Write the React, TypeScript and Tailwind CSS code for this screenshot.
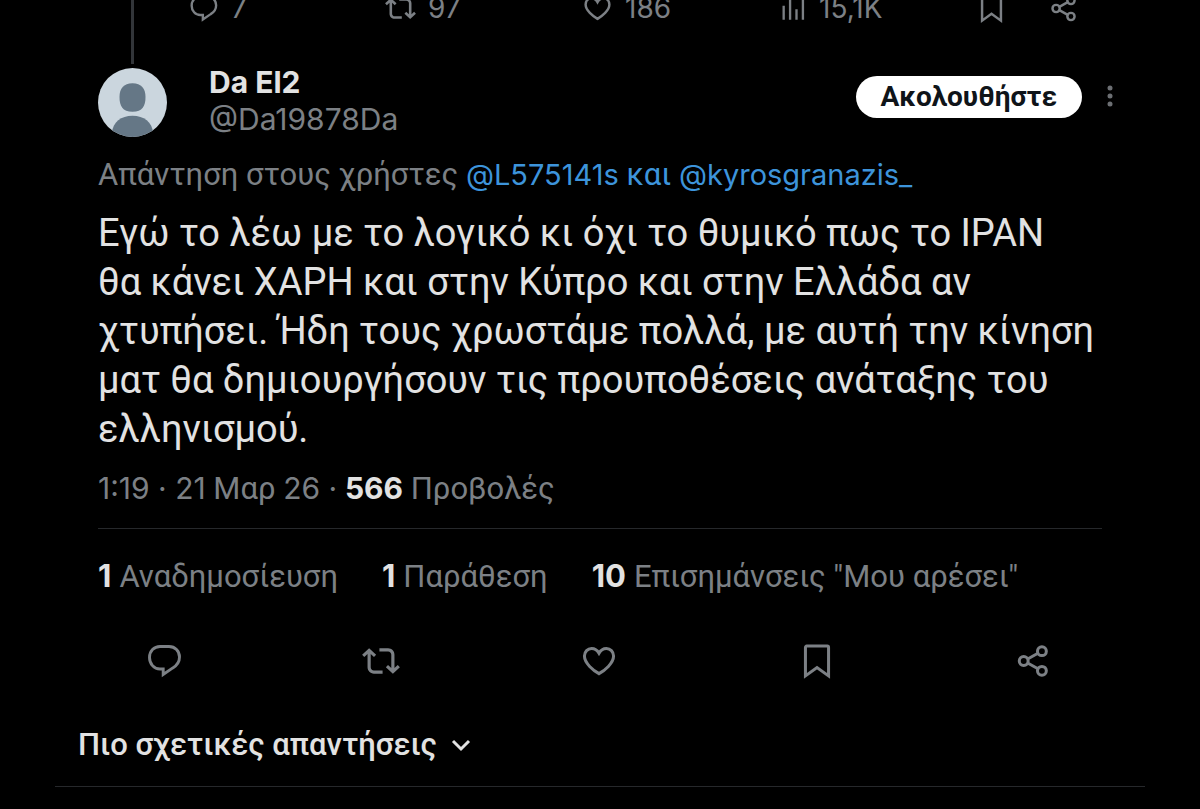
import type { ReactNode } from 'react';

const LINES = [
  'Εγώ το λέω με το λογικό κι όχι το θυμικό πως το ΙΡΑΝ',
  'θα κάνει ΧΑΡΗ και στην Κύπρο και στην Ελλάδα αν',
  'χτυπήσει. Ήδη τους χρωστάμε πολλά, με αυτή την κίνηση',
  'ματ θα δημιουργήσουν τις προυποθέσεις ανάταξης του',
  'ελληνισμού.',
];

type IconProps = { className?: string };

function ReplyIcon({ className = '' }: IconProps) {
  return (
    <svg viewBox="0 0 38 38" className={className} fill="none" stroke="currentColor" strokeWidth="2.9" aria-hidden="true">
      <path d="M15 4.500h9c6 0 10.500 4.500 10.500 10.500 0 4.800-2.700 8.500-6.700 10.900L18.200 32.500v-5.500H15C9 27 4.500 21.800 4.500 15.500 4.500 9 9 4.500 15 4.500z" />
    </svg>
  );
}

function RepostIcon({ className = '' }: IconProps) {
  return (
    <svg viewBox="0 0 24 24" className={className} fill="currentColor" aria-hidden="true">
      <path d="M4.5 3.88l4.432 4.14-1.364 1.46L5.5 7.55V16c0 1.1.896 2 2 2H13v2H7.5c-2.209 0-4-1.79-4-4V7.55L1.432 9.48.068 8.02 4.5 3.88zM16.5 6H11V4h5.5c2.209 0 4 1.79 4 4v8.45l2.068-1.93 1.364 1.46-4.432 4.14-4.432-4.14 1.364-1.46 2.068 1.93V8c0-1.1-.896-2-2-2z" />
    </svg>
  );
}

function HeartIcon({ className = '' }: IconProps) {
  return (
    <svg viewBox="0 0 24 24" className={className} fill="none" stroke="currentColor" strokeWidth="1.9" aria-hidden="true">
      <path d="M12 20C8.500 18 2.800 13.500 2.800 8.900 2.800 6 4.900 4.100 7.300 4.100c2 0 3.600 1 4.700 3 1.100-2 2.700-3 4.700-3 2.400 0 4.500 1.900 4.500 4.800C21.200 13.500 15.500 18 12 20z" />
    </svg>
  );
}

function ViewsIcon({ className = '' }: IconProps) {
  return (
    <svg viewBox="0 0 24 24" className={className} fill="none" stroke="currentColor" strokeWidth="2" aria-hidden="true">
      <path d="M4 22V10M9.500 22V2M15 22v-9M20.500 22V5" />
    </svg>
  );
}

function BookmarkIcon({ className = '' }: IconProps) {
  return (
    <svg viewBox="0 0 24 24" className={className} fill="none" stroke="currentColor" strokeWidth="1.9" aria-hidden="true">
      <path d="M4.700 3.400c0-.500.300-.800.800-.800h13c.500 0 .800.300.800.800v18L12 16.100l-7.300 5.300z" />
    </svg>
  );
}

function ShareIcon({ className = '' }: IconProps) {
  return (
    <svg viewBox="0 0 24 24" className={className} fill="none" stroke="currentColor" strokeWidth="1.9" aria-hidden="true">
      <circle cx="5.500" cy="12" r="2.800" />
      <circle cx="17" cy="5.800" r="2.800" />
      <circle cx="17" cy="18.200" r="2.800" />
      <path d="M8 10.700l6.500-3.600M8 13.300l6.500 3.600" />
    </svg>
  );
}

function Stat({ count, label }: { count: string; label: string }) {
  return (
    <a href="#stats" className="flex items-baseline gap-2">
      <b className="font-[Inter] text-[31px] font-bold text-[#e2e2e2]">{count}</b>
      <span>{label}</span>
    </a>
  );
}

function Action({ label, children, count }: { label: string; children: ReactNode; count?: string }) {
  return (
    <button type="button" aria-label={label} className="flex items-center justify-center gap-3">
      {children}
      {count && <span className="font-[Inter] text-[28px]">{count}</span>}
    </button>
  );
}

export default function App() {
  return (
    <main className="min-h-screen overflow-hidden bg-black px-[55px] font-[Roboto,sans-serif] text-[31px] leading-10 text-[#7c8085]">
      <div className="flex h-16 px-[43px]">
        <div className="flex w-[69px] shrink-0 justify-center">
          <div className="w-[3px] bg-[#323539]" />
        </div>
        <div className="ml-[21px] flex h-4 flex-1 items-center">
          <div className="grid flex-1 grid-cols-4 justify-items-start">
            <Action label="Απάντηση" count="7"><ReplyIcon className="size-[31px]" /></Action>
            <Action label="Αναδημοσίευση" count="97"><RepostIcon className="size-[31px]" /></Action>
            <Action label="Μου αρέσει" count="186"><HeartIcon className="size-[31px]" /></Action>
            <Action label="Προβολές" count="15,1K"><ViewsIcon className="size-[28px]" /></Action>
          </div>
          <div className="mr-[22px] flex gap-[42px]">
            <Action label="Σελιδοδείκτης"><BookmarkIcon className="size-[31px]" /></Action>
            <Action label="Κοινοποίηση"><ShareIcon className="size-[31px]" /></Action>
          </div>
        </div>
      </div>

      <article>
        <div className="px-[43px]">
          <header className="-mr-4 flex">
            <svg viewBox="0 0 70 70" className="mt-1 size-[69px] shrink-0 rounded-full" aria-hidden="true">
              <rect width="70" height="70" fill="#cbd6de" />
              <path d="M35 15.500c9 0 13.200 5.500 13.200 14 0 9-3 15-13.200 15s-13.200-6-13.200-15c0-8.500 4.200-14 13.200-14z" fill="#657786" />
              <path d="M14 66c1-11 9.500-17.500 21-17.500S55 55 56 66l-6 4H20z" fill="#657786" />
            </svg>
            <div className="ml-[42px] flex-1 font-[Inter] text-[30px] leading-[37px]">
              <h1 className="font-bold text-[#e2e2e2]">Da El2</h1>
              <p>@Da19878Da</p>
            </div>
            <button type="button" className="mt-3 h-[42px] rounded-full bg-white px-[25px] text-[28px] leading-10 font-bold text-[#0f1419]">
              Ακολουθήστε
            </button>
            <button type="button" aria-label="Περισσότερα" className="mt-3 ml-5 h-10 w-4">
              <svg viewBox="0 0 16 40" className="h-10 w-4" fill="#6c6f73" aria-hidden="true">
                <circle cx="8" cy="12" r="2.500" />
                <circle cx="8" cy="20" r="2.500" />
                <circle cx="8" cy="28" r="2.500" />
              </svg>
            </button>
          </header>

          <p className="mt-[17px]">
            Απάντηση στους χρήστες{' '}
            <a href="#users" className="text-[#3d94db]">
              <span className="font-[Inter] text-[29px]">@L575141s</span> και{' '}
              <span className="font-[Inter] text-[29px]">@kyrosgranazis_</span>
            </a>
          </p>

          <p className="mt-[14px] text-[38px] leading-[49px] whitespace-pre-line text-[#e2e2e2]">{LINES.join('\n')}</p>

          <p className="mt-[14px]">
            <span className="font-[Inter] text-[30px]">1:19 · 21</span> Μαρ{' '}
            <span className="font-[Inter] text-[30px]">26 ·</span>{' '}
            <b className="font-[Inter] text-[30px] font-bold text-[#e2e2e2]">566</b> Προβολές
          </p>

          <div className="mt-[19px] flex gap-11 border-t border-[#26282b] pt-[27px]">
            <Stat count="1" label="Αναδημοσίευση" />
            <Stat count="1" label="Παράθεση" />
            <Stat count="10" label={'Επισημάνσεις "Μου αρέσει"'} />
          </div>
        </div>

        <div className="mt-[45px] grid grid-cols-5 pr-[2px]">
          <Action label="Απάντηση"><ReplyIcon className="size-[38px]" /></Action>
          <Action label="Αναδημοσίευση"><RepostIcon className="size-[38px]" /></Action>
          <Action label="Μου αρέσει"><HeartIcon className="size-[38px]" /></Action>
          <Action label="Σελιδοδείκτης"><BookmarkIcon className="size-[38px]" /></Action>
          <Action label="Κοινοποίηση"><ShareIcon className="size-[38px]" /></Action>
        </div>
      </article>

      <div className="mt-[45px] border-b border-[#26282b] px-[23px] pb-[21px]">
        <button type="button" className="flex items-center gap-[14px] font-medium text-[#e2e2e2]">
          Πιο σχετικές απαντήσεις
          <svg viewBox="0 0 20 14" className="h-[14px] w-5" fill="none" stroke="currentColor" strokeWidth="3" aria-hidden="true">
            <path d="M2 3l8 8 8-8" />
          </svg>
        </button>
      </div>
    </main>
  );
}
